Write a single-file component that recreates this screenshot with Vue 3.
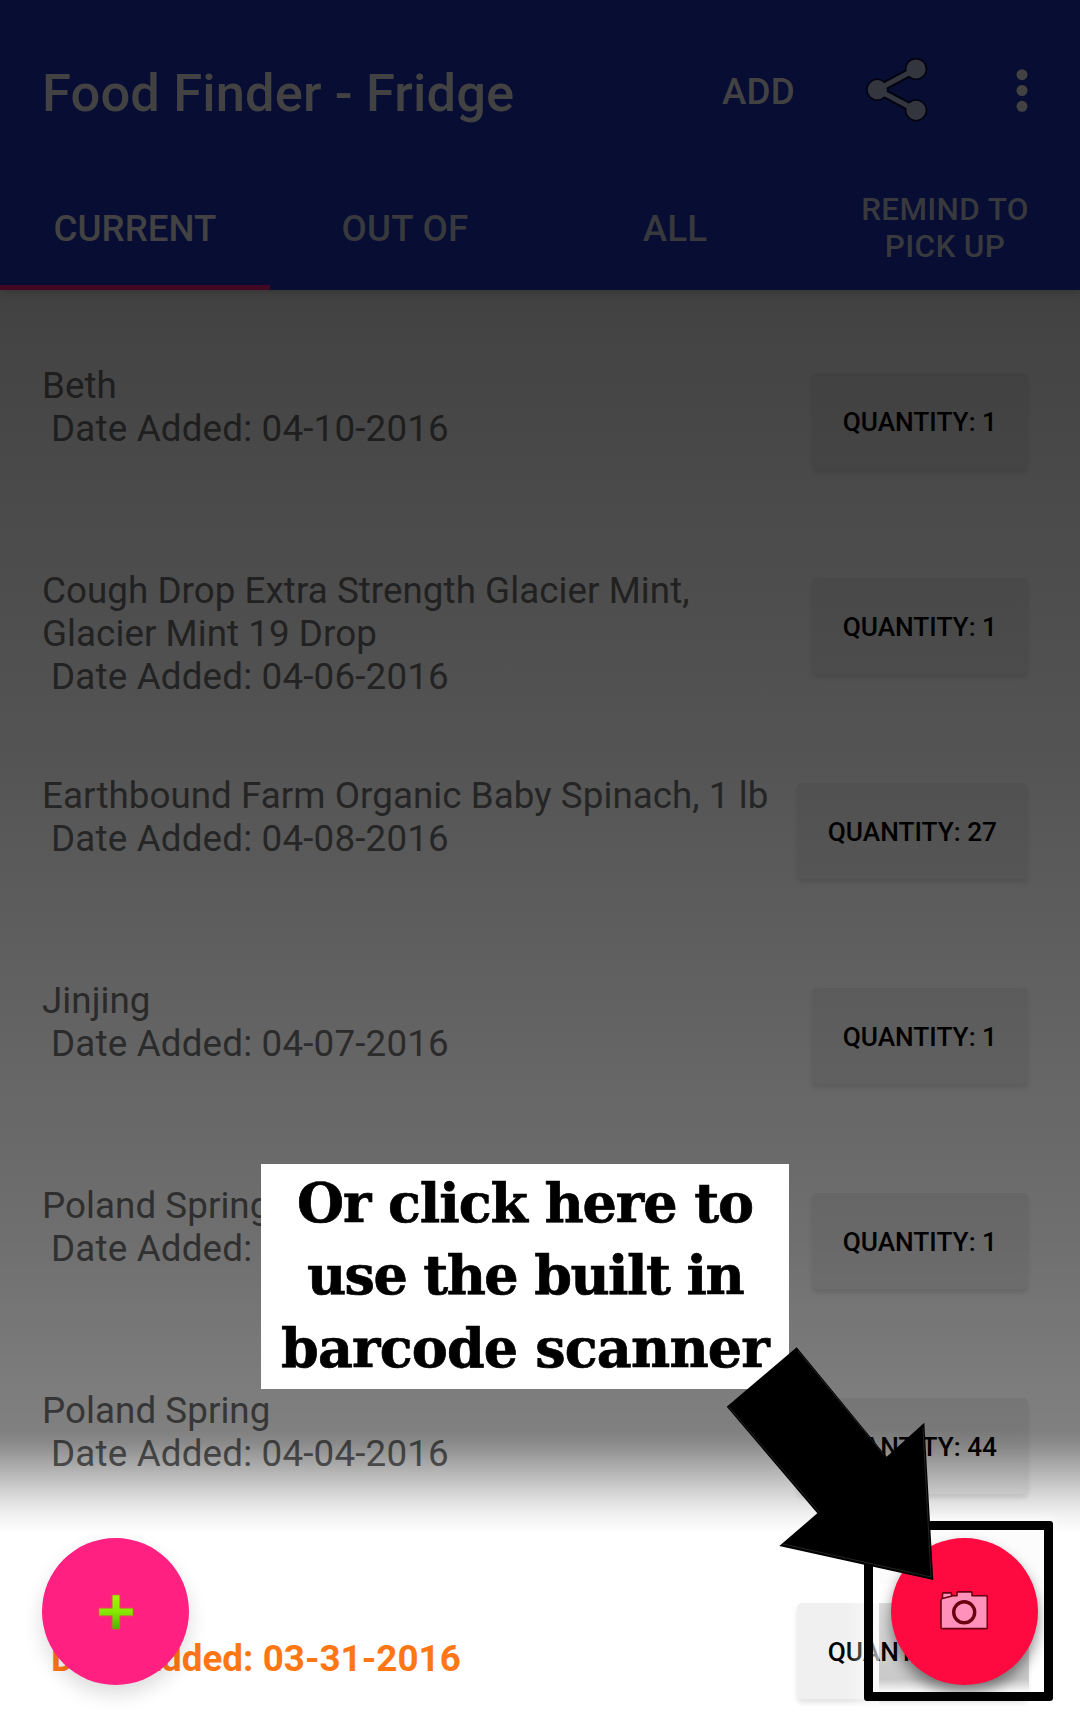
<script setup>
const tabs = [
  { label: 'CURRENT', active: true },
  { label: 'OUT OF' },
  { label: 'ALL' },
  { label: 'REMIND TO PICK UP', small: true },
]

const items = [
  { name: 'Beth', date: '04-10-2016', quantity: 1 },
  { name: 'Cough Drop Extra Strength Glacier Mint, Glacier Mint 19 Drop', date: '04-06-2016', quantity: 1 },
  { name: 'Earthbound Farm Organic Baby Spinach, 1 lb', date: '04-08-2016', quantity: 27 },
  { name: 'Jinjing', date: '04-07-2016', quantity: 1 },
  { name: 'Poland Spring', date: '', quantity: 1 },
  { name: 'Poland Spring', date: '04-04-2016', quantity: 44 },
  { name: '\u00a0', date: '03-31-2016', quantity: 27, due: true },
]
</script>

<template>
  <div class="screen">
    <header class="app-bar">
      <div class="toolbar">
        <h1 class="title">Food Finder - Fridge</h1>
        <span class="add">ADD</span>
        <svg class="share" width="68" height="72" viewBox="0 0 68 72">
          <g fill="#02040f" stroke="#02040f" stroke-linecap="round">
            <path d="M54 15 15.3 35.7 54 56.3" fill="none" stroke-width="9" />
            <circle cx="15.3" cy="35.7" r="10.8" />
            <circle cx="54" cy="15" r="10.8" />
            <circle cx="54" cy="56.3" r="10.8" />
          </g>
          <g fill="#33363f">
            <path d="M54 15 15.3 35.7 54 56.3" fill="none" stroke="#33363f" stroke-width="5" />
            <circle cx="15.3" cy="35.7" r="9.6" />
            <circle cx="54" cy="15" r="9.6" />
            <circle cx="54" cy="56.3" r="9.6" />
          </g>
        </svg>
        <svg class="more" width="12" height="46" viewBox="0 0 12 46" fill="#424242">
          <circle cx="6" cy="6.700" r="5.5" />
          <circle cx="6" cy="22.500" r="5.5" />
          <circle cx="6" cy="38.300" r="5.5" />
        </svg>
      </div>
      <nav class="tabs">
        <div v-for="tab in tabs" :key="tab.label" class="tab" :class="{ active: tab.active, small: tab.small }">
          <span>{{ tab.label }}</span>
        </div>
      </nav>
    </header>

    <main class="list">
      <div v-for="(item, i) in items" :key="i" class="row" :class="{ due: item.due }">
        <div class="text">
          <div>{{ item.name }}</div>
          <div class="date">Date Added: {{ item.date }}</div>
        </div>
        <button class="quantity">QUANTITY: {{ item.quantity }}</button>
      </div>
    </main>

    <div class="shade"></div>

    <div class="fab fab-add">
      <svg width="36" height="36" viewBox="0 0 36 36">
        <defs>
          <linearGradient id="plus" x1="0" y1="0" x2="0" y2="1">
            <stop offset="0" stop-color="#a2f500" />
            <stop offset=".5" stop-color="#86e800" />
            <stop offset="1" stop-color="#4db400" />
          </linearGradient>
        </defs>
        <path d="M14.2 1h7.6v13.2H35v7.6H21.8V35h-7.6V21.8H1v-7.6h13.2z" fill="url(#plus)" stroke="#c07a30" stroke-width=".7" />
      </svg>
    </div>

    <div class="glow"></div>
    <div class="fade"></div>
    <div class="spotlight">
      <div class="dim"></div>
      <div class="fab fab-scan">
        <svg width="48" height="39" viewBox="0 0 48 39" fill="#ff91bb" stroke="#68000f" stroke-width="1.6" stroke-linejoin="round">
          <path d="M2.5 7.600V3q0-1.1 1.1-1.1h7q1 0 1 1.1v2.200" />
          <path d="M1 9.2Q1 8 2.5 7.6L13 4.7h4V2q0-1.1 1-1.1h13q1 0 1 1.1v2.7h14q1.3 0 1.3 1.2v30.5q0 1.2-1.2 1.2h-44Q1 37.600 1 36.400z" />
          <circle cx="24.200" cy="21.300" r="10.500" stroke-width="3.400" />
        </svg>
      </div>
    </div>

    <div class="callout">
      <span class="l1">Or click here to</span>
      <span class="l2">use the built in</span>
      <span class="l3">barcode scanner</span>
    </div>

    <svg class="arrow" width="208" height="234" viewBox="726 1347 208 234">
      <path d="M796.700 1347.300 886.700 1456.700 924.300 1422.700 933.300 1580 779.300 1546 817.300 1513.300 726.700 1406.700z" fill="#000" />
      <g fill="none" stroke="#3a3a3a" stroke-width=".6">
        <path d="M798 1351 884 1455" />
        <path d="M729 1407 819 1512" />
        <path d="M923 1428 931 1577 783 1544" />
      </g>
    </svg>
  </div>
</template>

<style>
body {
  margin: 0;
}
</style>

<style scoped>
.screen {
  position: relative;
  width: 1080px;
  height: 1725px;
  overflow: hidden;
  background: #fff;
  font-family: Roboto, "Noto Sans", sans-serif;
}
.app-bar {
  position: relative;
  z-index: 2;
  height: 290px;
  background: #070d33;
  box-shadow: 0 2px 8px rgba(0, 0, 0, 0.2);
  color: #424242;
}
.toolbar {
  display: flex;
  align-items: center;
  height: 182px;
  padding: 0 52px 0 42px;
}
.title {
  flex: 1;
  margin: 3px 0 0;
  font-size: 52.5px;
  font-weight: 500;
  letter-spacing: 0.12px;
}
.add {
  font-size: 36.75px;
  font-weight: 500;
  letter-spacing: 0.2px;
}
.share {
  margin: 0 0 3px 67px;
}
.more {
  margin-left: 86px;
}
.tabs {
  display: flex;
  height: 108px;
}
.tab {
  box-sizing: border-box;
  display: flex;
  flex: 1;
  align-items: center;
  justify-content: center;
  padding: 0 25px 10px;
  border-bottom: 5px solid transparent;
  color: #38393d;
  font-size: 36.75px;
  font-weight: 500;
  line-height: 43px;
  letter-spacing: 0.2px;
  text-align: center;
}
.tab.active {
  border-color: #420821;
  color: #424242;
  letter-spacing: 0;
}
.tab.small {
  padding-bottom: 12px;
  font-size: 31.5px;
  line-height: 37px;
  letter-spacing: 0.35px;
}
.list {
  padding: 74px 52px 0 42px;
}
.row {
  display: flex;
  align-items: flex-start;
  justify-content: space-between;
  height: 205px;
  color: #6d6d6d;
  font-size: 36.75px;
  line-height: 43px;
  letter-spacing: 0.05px;
}
.text {
  width: 735px;
}
.date {
  padding-left: 9px;
  letter-spacing: 0.18px;
}
.due {
  color: #ff7714;
  font-weight: 700;
}
.due .date {
  letter-spacing: 0.05px;
}
.quantity {
  flex: none;
  height: 96px;
  margin: 9px 0 0;
  padding: 2px 31px 0;
  border: 0;
  border-radius: 5px;
  background: #f0f0f0;
  box-shadow: 0 4px 5px rgba(0, 0, 0, 0.11);
  color: #000;
  font-family: inherit;
  font-size: 26.25px;
  font-weight: 500;
}
.shade {
  position: absolute;
  inset: 290px 0 0;
  background: linear-gradient(
    rgba(0, 0, 0, 0.745) 0,
    rgba(0, 0, 0, 0.733) 50px,
    rgba(0, 0, 0, 0.675) 450px,
    rgba(0, 0, 0, 0.565) 950px,
    rgba(0, 0, 0, 0.498) 1140px,
    rgba(0, 0, 0, 0.46) 1153px,
    rgba(0, 0, 0, 0.32) 1177px,
    rgba(0, 0, 0, 0.15) 1206px,
    rgba(0, 0, 0, 0.06) 1224px,
    rgba(0, 0, 0, 0) 1243px
  );
}
.fab {
  position: absolute;
  display: flex;
  align-items: center;
  justify-content: center;
  width: 147px;
  height: 147px;
  border-radius: 50%;
}
.fab-add {
  top: 1538px;
  left: 42px;
  background: #ff2082;
  box-shadow: 0 9px 20px rgba(0, 0, 0, 0.14);
}
.glow {
  position: absolute;
  top: 1524px;
  left: 880px;
  width: 170px;
  height: 60px;
  background: #fcfcfc;
  box-shadow: 0 0 9px 5px rgba(255, 255, 255, 0.8);
}
.fade {
  position: absolute;
  top: 1598px;
  left: 846px;
  width: 33px;
  height: 112px;
  background: linear-gradient(to right, rgba(255, 255, 255, 0), rgba(255, 255, 255, 0.65));
}
.spotlight {
  position: absolute;
  top: 1521px;
  left: 864px;
  box-sizing: border-box;
  width: 189px;
  height: 180px;
  border: 9px solid #000;
  border-radius: 3px;
  overflow: hidden;
}
.dim {
  position: absolute;
  top: 73px;
  left: 6px;
  width: 150px;
  height: 89px;
  background: linear-gradient(rgba(255, 255, 255, 0) 76px, #fafafa 89px), linear-gradient(rgba(0, 0, 0, 0.08), rgba(0, 0, 0, 0.18));
}
.fab-scan {
  top: 8px;
  left: 18px;
  background: #ff0a40;
  box-shadow: 0 8px 14px rgba(0, 0, 0, 0.45);
}
.fab-scan svg {
  margin: -2px 0 0 -1px;
}
.callout {
  position: absolute;
  top: 1164px;
  left: 261px;
  display: flex;
  flex-direction: column;
  align-items: center;
  box-sizing: border-box;
  width: 528px;
  height: 225px;
  padding-top: 3px;
  background: #fff;
  color: #000;
  font-family: "DejaVu Serif", serif;
  font-size: 54px;
  font-weight: 700;
  line-height: 72.4px;
  white-space: nowrap;
  -webkit-text-stroke: 0.7px #000;
}
.l1 {
  letter-spacing: -1.1px;
}
.l2 {
  letter-spacing: -1.6px;
}
.l3 {
  letter-spacing: -0.85px;
}
.arrow {
  position: absolute;
  top: 1347px;
  left: 726px;
}
</style>
